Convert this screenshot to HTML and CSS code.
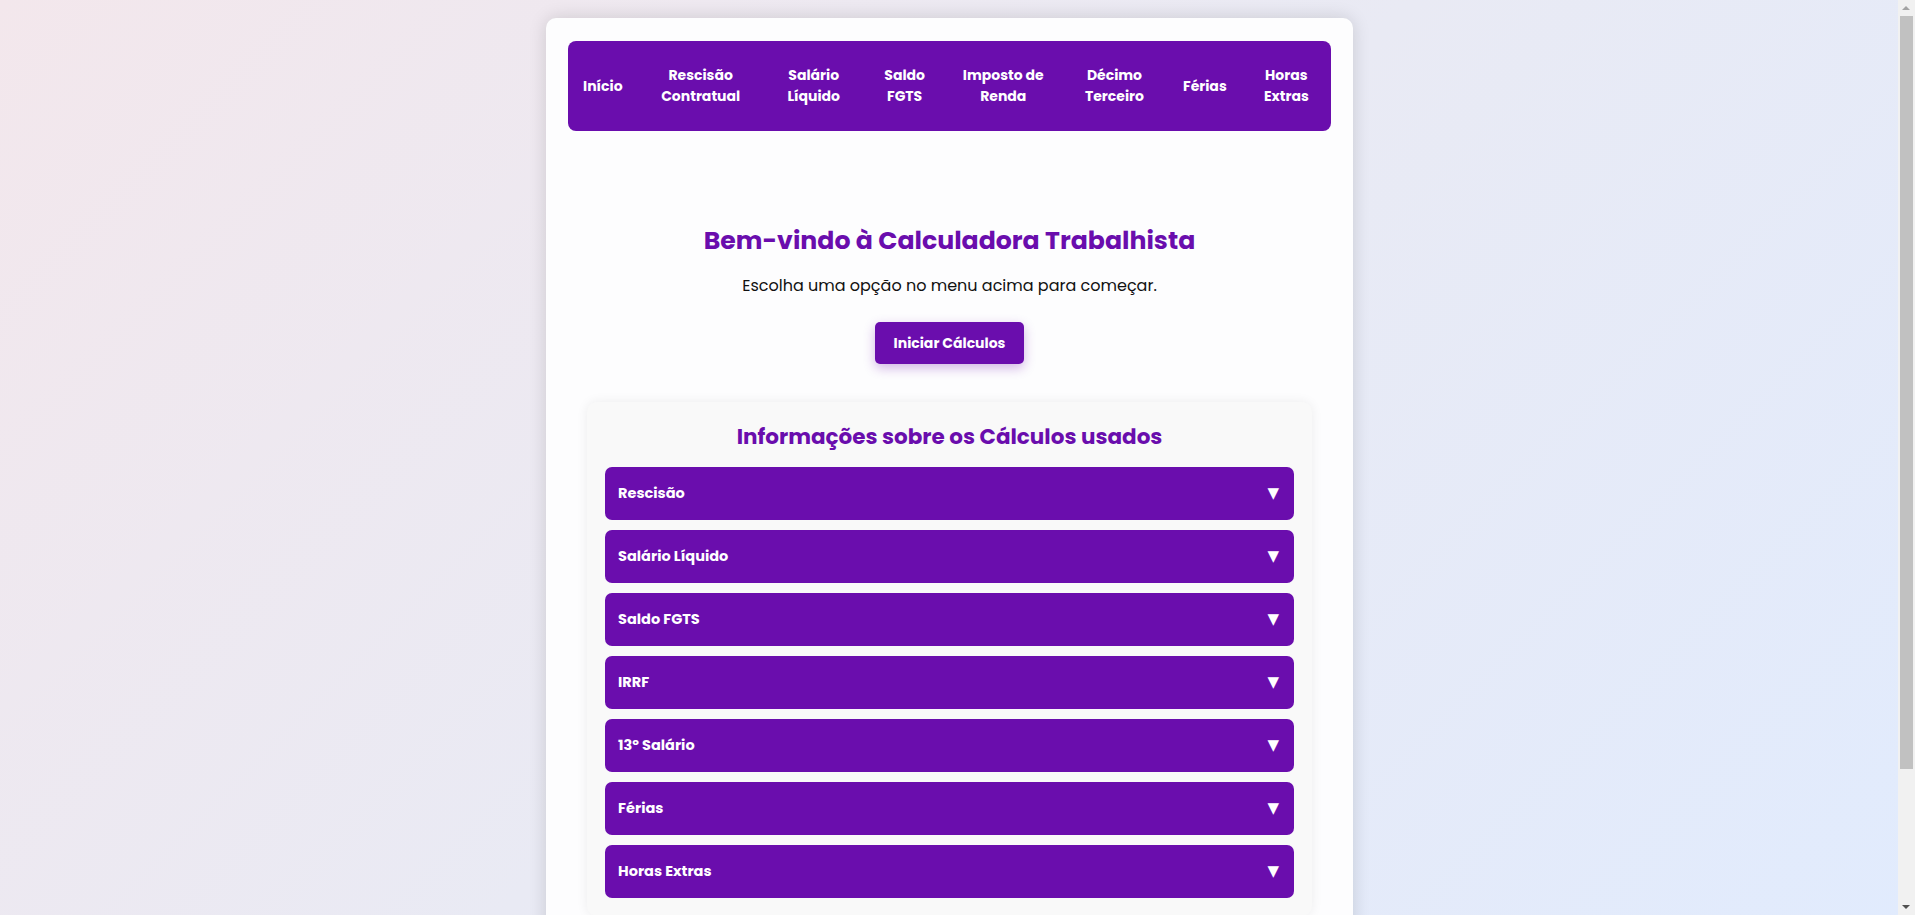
FILE: index.html
```html
<!DOCTYPE html>
<html lang="pt-BR">
<head>
<meta charset="UTF-8">
<title>Calculadora Trabalhista</title>
<link rel="stylesheet" href="styles.css">
</head>
<body>
<div class="container">
  <nav class="menu">
    <a href="#">Início</a>
    <a href="#">Rescisão Contratual</a>
    <a href="#">Salário Líquido</a>
    <a href="#">Saldo FGTS</a>
    <a href="#">Imposto de Renda</a>
    <a href="#">Décimo Terceiro</a>
    <a href="#">Férias</a>
    <a href="#">Horas Extras</a>
  </nav>

  <section class="home">
    <h1 class="home-title">Bem-vindo à Calculadora Trabalhista</h1>
    <p class="home-text">Escolha uma opção no menu acima para começar.</p>
    <button class="btn-start">Iniciar Cálculos</button>

    <div class="info">
      <h2 class="info-title">Informações sobre os Cálculos usados</h2>
      <div class="acc-item"><span>Rescisão</span><span class="arrow">▼</span></div>
      <div class="acc-item"><span>Salário Líquido</span><span class="arrow">▼</span></div>
      <div class="acc-item"><span>Saldo FGTS</span><span class="arrow">▼</span></div>
      <div class="acc-item"><span>IRRF</span><span class="arrow">▼</span></div>
      <div class="acc-item"><span>13º Salário</span><span class="arrow">▼</span></div>
      <div class="acc-item"><span>Férias</span><span class="arrow">▼</span></div>
      <div class="acc-item"><span>Horas Extras</span><span class="arrow">▼</span></div>
    </div>
  </section>
</div>

<div class="scrollbar">
  <span class="sb-up"></span>
  <span class="sb-thumb"></span>
  <span class="sb-down"></span>
</div>
</body>
</html>
```

FILE: styles.css
```css
* { box-sizing: border-box; }

html, body {
  margin: 0;
  padding: 0;
}

body {
  font-family: "Poppins", "Open Sans", sans-serif;
  background: linear-gradient(135deg, #f3e7ec 0%, #e9eaf4 50%, #e1ebfd 100%);
  background-attachment: fixed;
  color: #111;
  padding: 18px 16px 18px 0;
}

.container {
  width: 807px;
  margin: 0 auto;
  background: #fdfdfe;
  border-radius: 10px;
  padding: 23px 22px 22px;
  box-shadow: 0 0 18px rgba(0, 0, 0, 0.14);
}

.menu {
  display: flex;
  align-items: center;
  height: 90px;
  padding: 0;
  background: #6a0dad;
  border-radius: 8px;
}

.menu a {
  color: #fff;
  text-decoration: none;
  font-weight: 700;
  font-size: 14px;
  line-height: 21px;
  text-align: center;
  padding: 15px;
}

.home {
  text-align: center;
  padding: 93px 0 114px;
}

.home-title {
  margin: 0;
  font-size: 25.2px;
  font-weight: 700;
  color: #6a0dad;
  line-height: 33px;
}

.home-text {
  margin: 17px 0 24px;
  font-size: 16px;
  line-height: 24px;
}

.btn-start {
  display: block;
  margin: 0 auto;
  font-family: inherit;
  font-size: 14px;
  font-weight: 700;
  color: #fff;
  background: #6a0dad;
  border: none;
  border-radius: 5px;
  width: 149px;
  height: 42px;
  box-shadow: 0 4px 12px rgba(106, 13, 173, 0.3);
}

.info {
  width: 95%;
  margin: 38px auto 0;
  padding: 18.5px 18px 18px;
  background: #f9f9f9;
  border-radius: 10px;
  box-shadow: 0 0 12px rgba(0, 0, 0, 0.07);
}

.info-title {
  margin: 0 0 15px;
  font-size: 21.5px;
  font-weight: 700;
  color: #6a0dad;
  line-height: 31px;
}

.acc-item {
  display: flex;
  justify-content: space-between;
  align-items: center;
  height: 53px;
  padding: 0 15px 0 13px;
  margin-bottom: 10px;
  background: #6a0dad;
  border-radius: 7px;
  color: #fff;
  font-size: 14.5px;
  font-weight: 700;
}

.acc-item:last-child { margin-bottom: 0; }

.arrow {
  font-size: 15px;
  font-family: "DejaVu Sans", sans-serif;
}

.scrollbar {
  position: fixed;
  top: 0;
  right: 0;
  width: 17px;
  height: 100%;
  background: #f1f1f1;
}

.sb-thumb {
  position: absolute;
  top: 16px;
  left: 2px;
  right: 2px;
  height: 753px;
  background: #c1c1c1;
}

.sb-up,
.sb-down {
  position: absolute;
  left: 4px;
  width: 0;
  height: 0;
  border-left: 4.5px solid transparent;
  border-right: 4.5px solid transparent;
}

.sb-up {
  top: 6px;
  border-bottom: 4px solid #a3a3a3;
}

.sb-down {
  bottom: 6px;
  border-top: 4px solid #505050;
}
```
